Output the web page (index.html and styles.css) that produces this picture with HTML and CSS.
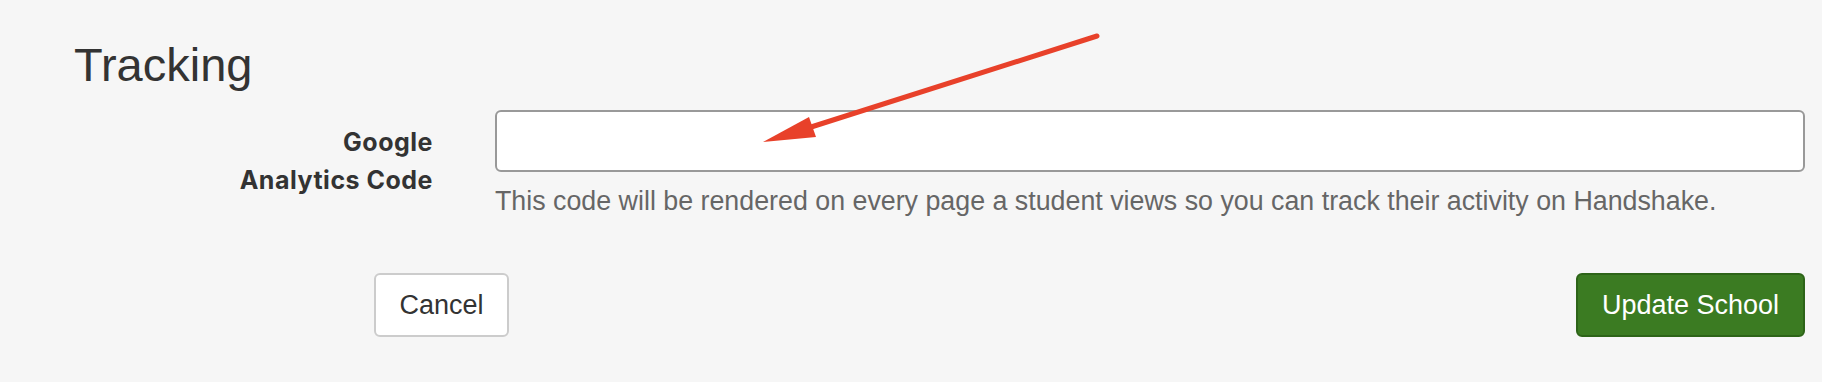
FILE: index.html
```html
<!DOCTYPE html>
<html lang="en">
<head>
<meta charset="utf-8">
<title>Tracking</title>
<link rel="stylesheet" href="styles.css">
</head>
<body>
<main class="page">
  <h2 class="section-title">Tracking</h2>
  <div class="form-row">
    <label class="field-label" for="ga-code">Google<br>Analytics Code</label>
    <div class="field">
      <input class="text-input" id="ga-code" type="text">
      <p class="help-text">This code will be rendered on every page a student views so you can track their activity on Handshake.</p>
    </div>
  </div>
  <div class="actions">
    <button class="btn btn-cancel" type="button">Cancel</button>
    <button class="btn btn-primary" type="submit">Update School</button>
  </div>
</main>
<svg class="annotation" width="1822" height="382" viewBox="0 0 1822 382" aria-hidden="true">
  <line x1="1097" y1="36" x2="808" y2="128" stroke="#e8412a" stroke-width="5" stroke-linecap="round"/>
  <polygon points="763,142 809,117 816,137" fill="#e8412a"/>
</svg>
</body>
</html>
```
FILE: styles.css
```css
html, body {
  margin: 0;
  padding: 0;
  background: #f6f6f6;
}

body {
  font-family: "Liberation Sans", Arial, sans-serif;
  color: #333;
  position: relative;
  width: 1822px;
  height: 382px;
  overflow: hidden;
}

.page {
  padding: 42px 17px 0 0;
}

.section-title {
  margin: 0 0 0 74px;
  font-size: 47px;
  line-height: 46px;
  font-weight: 400;
  color: #333;
}

.form-row {
  display: grid;
  grid-template-columns: 433px 1fr;
  column-gap: 62px;
  margin-top: 22px;
}

.field-label {
  text-align: right;
  font-family: "Inter", "Liberation Sans", sans-serif;
  font-weight: 700;
  font-size: 25px;
  letter-spacing: 0.5px;
  line-height: 38px;
  padding-top: 13px;
  color: #333;
}

.field {
  display: flex;
  flex-direction: column;
}

.text-input {
  box-sizing: border-box;
  height: 62px;
  width: 100%;
  border: 2px solid #999;
  border-radius: 6px;
  background: #fff;
  margin: 0;
  font: inherit;
}

.help-text {
  margin: 12px 0 0;
  font-size: 26.8px;
  line-height: 35px;
  color: #666;
}

.actions {
  display: flex;
  justify-content: space-between;
  margin-top: 54px;
  padding-left: 374px;
}

.btn {
  box-sizing: border-box;
  height: 64px;
  border-radius: 6px;
  font-family: "Liberation Sans", Arial, sans-serif;
  font-size: 27px;
  display: flex;
  align-items: center;
  justify-content: center;
  margin: 0;
}

.btn-cancel {
  width: 135px;
  background: #fff;
  border: 2px solid #ccc;
  color: #333;
}

.btn-primary {
  width: 229px;
  background: #3b7b22;
  border: 2px solid #2d6418;
  color: #fff;
}

.annotation {
  position: absolute;
  top: 0;
  left: 0;
  pointer-events: none;
}
```
